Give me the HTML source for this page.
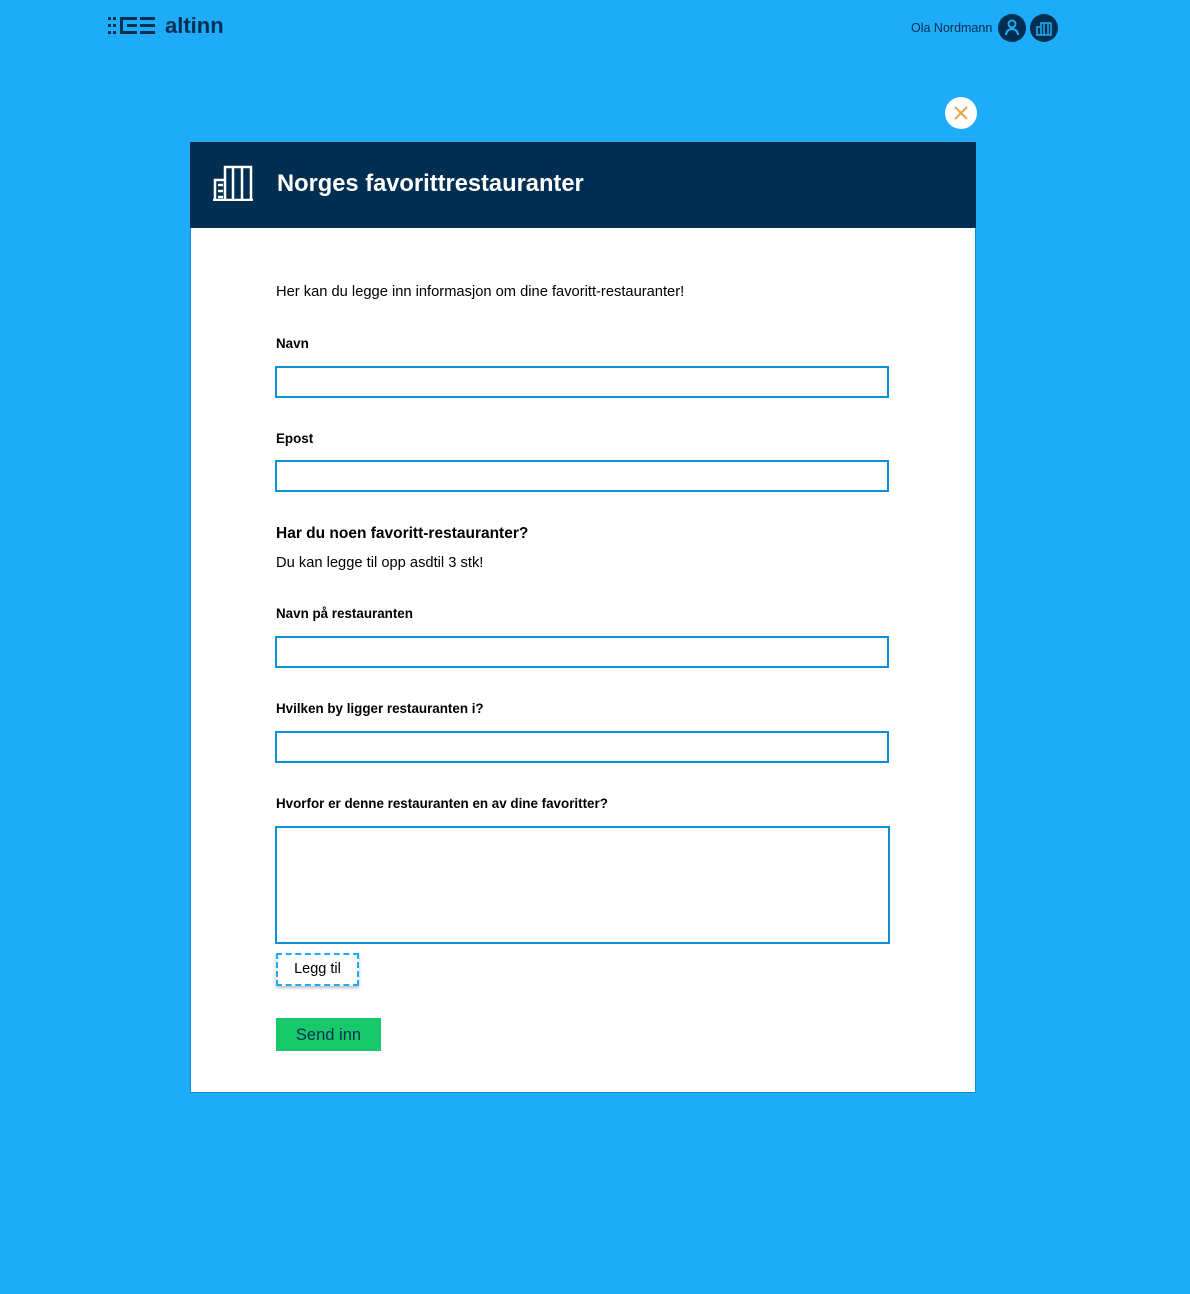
<!DOCTYPE html>
<html><head><meta charset="utf-8"><style>
*{box-sizing:border-box;margin:0;padding:0}
body{width:1190px;height:1294px;background:#1eabf7;font-family:"Liberation Sans",sans-serif;position:relative;overflow:hidden;color:#000}
.abs{position:absolute}
.lbl{position:absolute;left:276px;font-size:13.4px;font-weight:bold;color:#000}
.inp{position:absolute;left:275px;width:614px;height:32px;border:2px solid #0a8fd8;background:#fff}
</style></head><body>
<div class="abs" style="left:108px;top:16px">
<svg width="48" height="20" viewBox="0 0 48 20" fill="#022f51">
<rect x="0" y="1" width="3" height="3"/><rect x="5" y="1" width="3" height="3"/>
<rect x="0" y="8" width="3" height="3"/><rect x="5" y="8" width="3" height="3"/>
<rect x="0" y="15" width="3" height="3"/><rect x="5" y="15" width="3" height="3"/>
<path d="M12 1h17v3h-14v11h14v3h-17z"/><rect x="19" y="8" width="10" height="3"/>
<rect x="32" y="1" width="15" height="3"/><rect x="32" y="8" width="15" height="3"/><rect x="32" y="15" width="15" height="3"/>
</svg></div>
<div class="abs" style="left:165px;top:13px;font-size:22px;font-weight:bold;color:#022f51">altinn</div>
<div class="abs" style="left:911px;top:21px;font-size:12.5px;color:#022f51">Ola Nordmann</div>
<div class="abs" style="left:998px;top:14px;width:28px;height:28px;border-radius:50%;background:#022f51">
<svg width="28" height="28" viewBox="0 0 28 28" fill="none" stroke="#1eabf7" stroke-width="2"><circle cx="14" cy="10" r="3.5"/><path d="M8 21a6 6 0 0 1 12 0"/></svg></div>
<div class="abs" style="left:1030px;top:14px;width:28px;height:28px;border-radius:50%;background:#022f51">
<svg width="28" height="28" viewBox="0 0 28 28" fill="none" stroke="#1eabf7" stroke-width="1.5"><path d="M7 21v-8h4M11 21v-12h10v12M14 9v12M18 9v12M6 21h16"/></svg></div>
<div class="abs" style="left:945px;top:97px;width:32px;height:32px;border-radius:50%;background:#fff">
<svg width="32" height="32" viewBox="0 0 32 32" stroke="#e8a24f" stroke-width="2"><path d="M10 10l12 12M22 10l-12 12"/></svg></div>
<div class="abs" style="left:190px;top:142px;width:786px;height:951px;background:#fff;border:1px solid #0a8fd8"></div>
<div class="abs" style="left:190px;top:142px;width:786px;height:86px;background:#022f51"></div>
<div class="abs" style="left:213px;top:163px">
<svg width="40" height="38" viewBox="0 0 40 38" fill="none" stroke="#fff" stroke-width="2.5"><path d="M2 37v-20h10M12 37v-33h26v33M20 4v33M29 4v33M0 37h40"/><path d="M5 22h5M5 28h5M5 34h5" stroke-width="2.5"/></svg></div>
<div class="abs" style="left:277px;top:171px;font-size:23.7px;font-weight:bold;color:#fff">Norges favorittrestauranter</div>
<div class="abs" style="left:276px;top:284px;font-size:14.7px">Her kan du legge inn informasjon om dine favoritt-restauranter!</div>
<div class="lbl" style="top:336px">Navn</div>
<div class="inp" style="top:366px"></div>
<div class="lbl" style="top:431px">Epost</div>
<div class="inp" style="top:460px"></div>
<div class="abs" style="left:276px;top:525px;font-size:15.5px;font-weight:bold">Har du noen favoritt-restauranter?</div>
<div class="abs" style="left:276px;top:555px;font-size:14.7px">Du kan legge til opp asdtil 3 stk!</div>
<div class="lbl" style="top:606px">Navn på restauranten</div>
<div class="inp" style="top:636px"></div>
<div class="lbl" style="top:701px">Hvilken by ligger restauranten i?</div>
<div class="inp" style="top:731px"></div>
<div class="lbl" style="top:796px">Hvorfor er denne restauranten en av dine favoritter?</div>
<div class="inp" style="top:826px;width:615px;height:118px"></div>
<div class="abs" style="left:276px;top:953px;width:83px;height:33px;border:2px dashed #1eabf7;box-shadow:0 2px 3px rgba(0,0,0,.25);font-size:14.5px;text-align:center;line-height:29px">Legg til</div>
<div class="abs" style="left:276px;top:1018px;width:105px;height:33px;background:#17c96b;font-size:16.5px;text-align:center;line-height:35px;color:#022f51">Send inn</div>
</body></html>
